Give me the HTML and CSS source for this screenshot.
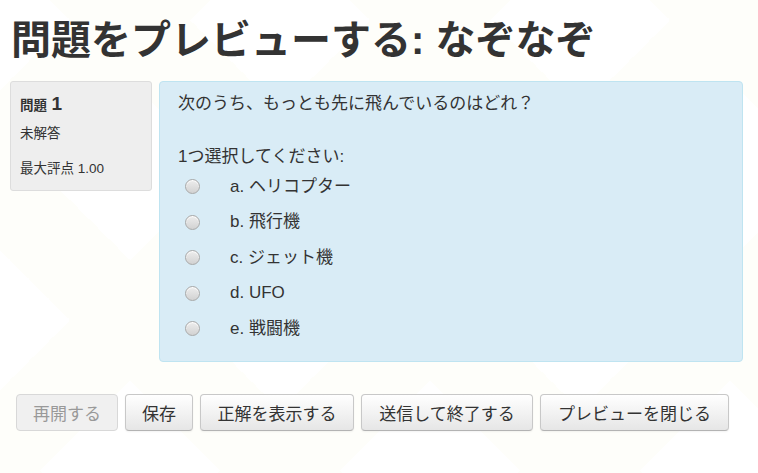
FILE: index.html
```html
<!DOCTYPE html>
<html lang="ja">
<head>
<meta charset="utf-8">
<title>問題をプレビューする: なぞなぞ</title>
<link rel="stylesheet" href="styles.css">
</head>
<body>
<h1 class="page-title">問題をプレビューする: なぞなぞ</h1>
<div class="que">
  <div class="info">
    <div class="qno"><span class="qlabel">問題</span> <span class="qnum">1</span></div>
    <div class="state">未解答</div>
    <div class="grade">最大評点 1.00</div>
  </div>
  <div class="content">
    <div class="qtext">次のうち、もっとも先に飛んでいるのはどれ？</div>
    <div class="prompt">1つ選択してください:</div>
    <div class="answers">
      <label class="opt"><span class="radio"></span><span class="otext">a. ヘリコプター</span></label>
      <label class="opt"><span class="radio"></span><span class="otext">b. 飛行機</span></label>
      <label class="opt"><span class="radio"></span><span class="otext">c. ジェット機</span></label>
      <label class="opt"><span class="radio"></span><span class="otext">d. UFO</span></label>
      <label class="opt"><span class="radio"></span><span class="otext">e. 戦闘機</span></label>
    </div>
  </div>
</div>
<div class="controls">
  <button class="btn btn-reopen" disabled>再開する</button>
  <button class="btn btn-save">保存</button>
  <button class="btn btn-show">正解を表示する</button>
  <button class="btn btn-submit">送信して終了する</button>
  <button class="btn btn-close">プレビューを閉じる</button>
</div>
</body>
</html>
```

FILE: styles.css
```css
html, body {
  margin: 0;
  padding: 0;
}
body {
  width: 758px;
  height: 473px;
  overflow: hidden;
  background-color: #ffffff;
  background-image:
    linear-gradient(135deg, transparent 0 40%, #fefefa 40% 60%, transparent 60%),
    linear-gradient(45deg, transparent 0 40%, #fefefa 40% 60%, transparent 60%);
  background-size: 300px 300px;
  background-position: -20px 170px;
  color: #333333;
  font-family: "Liberation Sans", "Noto Sans CJK JP", sans-serif;
}
.page-title {
  margin: 17px 0 0 0;
  padding-left: 11px;
  font-size: 40px;
  line-height: 47px;
  font-weight: bold;
  color: #333333;
}
.que {
  display: flex;
  align-items: flex-start;
  gap: 7px;
  margin-top: 17px;
  padding-left: 10px;
}
.info {
  box-sizing: border-box;
  width: 142px;
  height: 110px;
  padding: 8px 9px;
  background: #eeeeee;
  border: 1px solid #dddddd;
  border-radius: 3px;
}
.qno {
  height: 28px;
  line-height: 28px;
  font-weight: bold;
}
.qlabel {
  font-size: 13.5px;
}
.qnum {
  font-size: 19px;
}
.state {
  margin-top: 6px;
  font-size: 13.5px;
  line-height: 20px;
}
.grade {
  margin-top: 15px;
  font-size: 13.5px;
  line-height: 20px;
}
.content {
  box-sizing: border-box;
  width: 584px;
  height: 281px;
  padding: 10px 18px 0 18px;
  background: #d9ecf6;
  border: 1px solid #bfe4f1;
  border-radius: 4px;
  font-size: 17px;
}
.qtext {
  line-height: 24px;
}
.prompt {
  margin-top: 29px;
  line-height: 24px;
}
.answers {
  display: flex;
  flex-direction: column;
}
.opt {
  display: flex;
  align-items: center;
  height: 35.5px;
}
.radio {
  box-sizing: border-box;
  width: 15px;
  height: 15px;
  margin-left: 7px;
  border-radius: 50%;
  border: 1px solid #a8a8a8;
  background: linear-gradient(#ededed, #d2d2d2);
  box-shadow: inset 0 1px 1px #ffffff;
}
.otext {
  margin-left: 30px;
  line-height: 24px;
}
.controls {
  display: flex;
  gap: 7px;
  margin-top: 32px;
  padding-left: 16px;
}
.btn {
  box-sizing: border-box;
  height: 37px;
  padding: 0 10px;
  font-family: "Liberation Sans", "Noto Sans CJK JP", sans-serif;
  font-size: 17px;
  color: #333333;
  background: linear-gradient(#ffffff, #e6e6e6);
  border: 1px solid #c8c8c8;
  border-bottom-color: #b3b3b3;
  border-radius: 4px;
  box-shadow: 0 1px 2px rgba(0, 0, 0, 0.05);
}
.btn:disabled {
  color: #999999;
  background: #f0f0f0;
  border-color: #d8d8d8;
  box-shadow: none;
}
.btn-reopen { width: 102px; }
.btn-save { width: 68px; }
.btn-show { width: 154px; }
.btn-submit { width: 172px; }
.btn-close { width: 189px; }
```
